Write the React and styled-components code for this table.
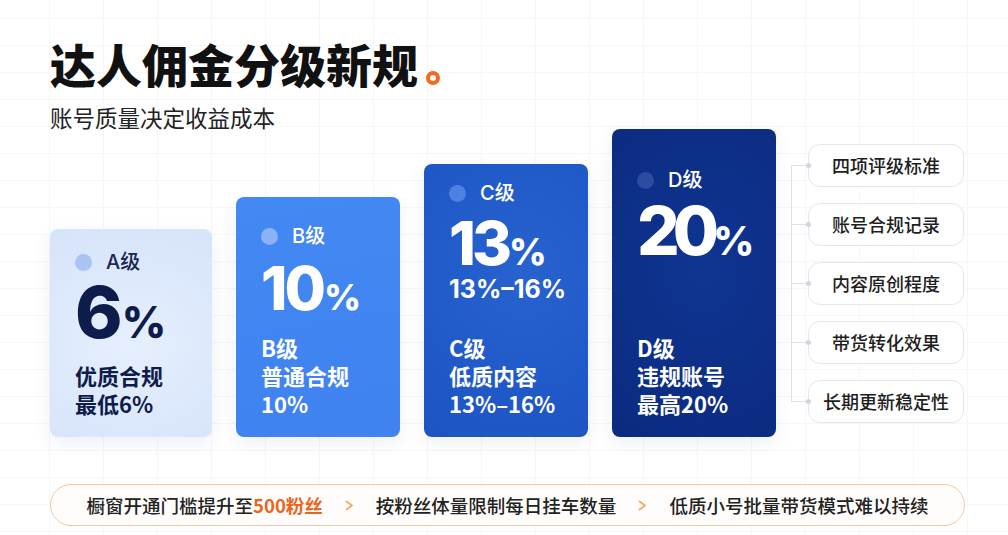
import React from "react";
import styled, { createGlobalStyle } from "styled-components";

const GlobalStyle = createGlobalStyle`
  html, body {
    margin: 0;
    padding: 0;
  }
  body {
    width: 1008px;
    height: 535px;
    overflow: hidden;
    background: #ffffff;
    font-family: "Noto Sans CJK SC", "Noto Sans", sans-serif;
    color: #1b1b1b;
  }
`;

const tiers = [
  {
    key: "A",
    label: "A级",
    num: "6",
    height: 208,
    pt: 21,
    numSize: 72,
    numGap: 2,
    track: -2,
    bg: "radial-gradient(120% 80% at 50% 55%, #e6effd 0%, #d9e6fb 60%, #d3e2fa 100%)",
    dot: "#a7c4f4",
    text: "#0e1c4b",
    labelColor: "#1c2754",
    lines: ["优质合规", "最低6%"],
  },
  {
    key: "B",
    label: "B级",
    num: "10",
    height: 240,
    pt: 27,
    numSize: 60,
    numGap: 10,
    track: -3,
    bg: "linear-gradient(170deg, #4388f3 0%, #3f82f0 100%)",
    dot: "#8ab2f7",
    text: "#ffffff",
    labelColor: "#ffffff",
    lines: ["B级", "普通合规", "10%"],
  },
  {
    key: "C",
    label: "C级",
    num: "13",
    sub: "13%–16%",
    height: 273,
    pt: 17,
    numSize: 61,
    numGap: 8,
    track: -4,
    bg: "radial-gradient(110% 70% at 60% 40%, #2862cf 0%, #205ac8 60%, #1d54c2 100%)",
    dot: "#4e80e2",
    text: "#ffffff",
    labelColor: "#ffffff",
    lines: ["C级", "低质内容", "13%–16%"],
  },
  {
    key: "D",
    label: "D级",
    num: "20",
    height: 308,
    pt: 39,
    numSize: 67,
    numGap: 5,
    track: -7,
    bg: "radial-gradient(110% 70% at 55% 45%, #0f3592 0%, #0c2e86 60%, #0a2a7d 100%)",
    dot: "#2b4c9f",
    text: "#ffffff",
    labelColor: "#ffffff",
    lines: ["D级", "违规账号", "最高20%"],
  },
];

const criteria = [
  "四项评级标准",
  "账号合规记录",
  "内容原创程度",
  "带货转化效果",
  "长期更新稳定性",
];

export default function App() {
  return (
    <>
      <GlobalStyle />
      <Page>
        <Title>
          达人佣金分级新规
          <TitleDot />
        </Title>
        <Subtitle>账号质量决定收益成本</Subtitle>

        <Main>
          <Cards>
            {tiers.map(t => (
              <Card
                key={t.key}
                $h={t.height}
                $pt={t.pt}
                $bg={t.bg}
                $color={t.text}
              >
                <CardHead $color={t.labelColor}>
                  <Dot $color={t.dot} />
                  {t.label}
                </CardHead>
                <BigNum $size={t.numSize} $gap={t.numGap}>
                  <Digits $track={t.track}>{t.num}</Digits>
                  <Pct>%</Pct>
                </BigNum>
                {t.sub && <SubRange>{t.sub}</SubRange>}
                <CardFoot>
                  {t.lines.map(line => (
                    <div key={line}>{line}</div>
                  ))}
                </CardFoot>
              </Card>
            ))}
          </Cards>

          <Criteria>
            {criteria.map(c => (
              <CriteriaItem key={c}>{c}</CriteriaItem>
            ))}
          </Criteria>
        </Main>

        <NoticeBar>
          <NoticeText>
            橱窗开通门槛提升至<Highlight>500粉丝</Highlight>
          </NoticeText>
          <Chevron />
          <NoticeText>按粉丝体量限制每日挂车数量</NoticeText>
          <Chevron />
          <NoticeText>低质小号批量带货模式难以持续</NoticeText>
        </NoticeBar>
      </Page>
    </>
  );
}

function Chevron() {
  return (
    <ChevronIcon width="9" height="11" viewBox="0 0 9 11">
      <path
        d="M1.5 1.5 L7 5.5 L1.5 9.5"
        fill="none"
        stroke="#f5a866"
        strokeWidth="1.8"
        strokeLinecap="round"
        strokeLinejoin="round"
      />
    </ChevronIcon>
  );
}

const Page = styled.div`
  box-sizing: border-box;
  width: 1008px;
  height: 535px;
  padding: 40px 43px 0 50px;
  display: flex;
  flex-direction: column;
  background-color: #ffffff;
  background-image: linear-gradient(to right, #f5f7fa 1px, transparent 1px),
    linear-gradient(to bottom, #f5f7fa 1px, transparent 1px);
  background-size: 54px 27px;
  background-position: -5px 18px;
`;

const Title = styled.h1`
  margin: 0;
  font-size: 46px;
  line-height: 46px;
  font-weight: 900;
  color: #111111;
  display: flex;
  align-items: flex-end;
`;

const TitleDot = styled.span`
  display: inline-block;
  box-sizing: border-box;
  width: 14px;
  height: 14px;
  border-radius: 50%;
  border: 4px solid #f26b1d;
  margin: 0 0 1px 8px;
`;

const Subtitle = styled.p`
  margin: 20px 0 0;
  font-size: 22.5px;
  line-height: 22px;
  font-weight: 400;
  color: #222222;
`;

const Main = styled.div`
  margin-top: 1px;
  height: 308px;
  display: flex;
  align-items: stretch;
  gap: 15px;
`;

const Cards = styled.div`
  display: flex;
  align-items: flex-end;
  gap: 24px;
`;

const Card = styled.div`
  box-sizing: border-box;
  width: 164px;
  height: ${p => p.$h}px;
  padding: ${p => p.$pt}px 18px 20px 25px;
  border-radius: 8px;
  background: ${p => p.$bg};
  color: ${p => p.$color};
  box-shadow: 0 6px 18px rgba(30, 60, 130, 0.08);
  display: flex;
  flex-direction: column;

  &:first-child {
    width: 162px;
  }
`;

const CardHead = styled.div`
  display: flex;
  align-items: center;
  gap: 14px;
  font-size: 20px;
  line-height: 24px;
  font-weight: 500;
  color: ${p => p.$color};
  font-family: "Inter", "Noto Sans CJK SC", sans-serif;
`;

const Dot = styled.span`
  width: 17px;
  height: 17px;
  border-radius: 50%;
  background: ${p => p.$color};
  flex-shrink: 0;
`;

const BigNum = styled.div`
  margin-top: ${p => p.$gap}px;
  font-family: "Inter", sans-serif;
  font-weight: 800;
  font-size: ${p => p.$size}px;
  line-height: 1;
  white-space: nowrap;
`;

const Digits = styled.span`
  letter-spacing: ${p => p.$track}px;
`;

const Pct = styled.span`
  font-size: 0.6em;
  letter-spacing: 0;
  margin-left: 1px;
`;

const SubRange = styled.div`
  font-family: "Inter", sans-serif;
  font-weight: 700;
  font-size: 25px;
  line-height: 30px;
  white-space: nowrap;
`;

const CardFoot = styled.div`
  margin-top: auto;
  font-size: 22px;
  line-height: 28px;
  font-weight: 700;
  white-space: nowrap;
`;

const Criteria = styled.div`
  position: relative;
  align-self: center;
  width: 173px;
  padding-left: 17px;
  box-sizing: border-box;
  display: flex;
  flex-direction: column;
  gap: 16px;

  &::before {
    content: "";
    position: absolute;
    left: 0;
    top: 21px;
    bottom: 21px;
    width: 1px;
    background: #dde1e8;
  }
`;

const CriteriaItem = styled.div`
  position: relative;
  height: 43px;
  border: 1px solid #e4e7ed;
  border-radius: 12px;
  background: #ffffff;
  box-sizing: border-box;
  display: flex;
  align-items: center;
  justify-content: center;
  font-size: 18px;
  font-weight: 500;
  color: #1e1e1e;

  &::before {
    content: "";
    position: absolute;
    left: -17px;
    top: 50%;
    width: 17px;
    height: 1px;
    background: #dde1e8;
  }

  &::after {
    content: "";
    position: absolute;
    left: -3px;
    top: calc(50% - 2px);
    width: 5px;
    height: 5px;
    border-radius: 50%;
    background: #cfd5e1;
  }
`;

const NoticeBar = styled.div`
  margin-top: 47px;
  width: 915px;
  height: 42px;
  box-sizing: border-box;
  border: 1.5px solid #f3c8a5;
  border-radius: 21px;
  background: #fffdfb;
  display: flex;
  align-items: center;
  justify-content: center;
  gap: 20px;
`;

const NoticeText = styled.span`
  font-size: 18.5px;
  line-height: 24px;
  font-weight: 500;
  color: #222222;
`;

const Highlight = styled.span`
  color: #ea661c;
  font-weight: 700;
`;

const ChevronIcon = styled.svg`
  display: block;
  flex-shrink: 0;
  margin: 0 2px;
`;
